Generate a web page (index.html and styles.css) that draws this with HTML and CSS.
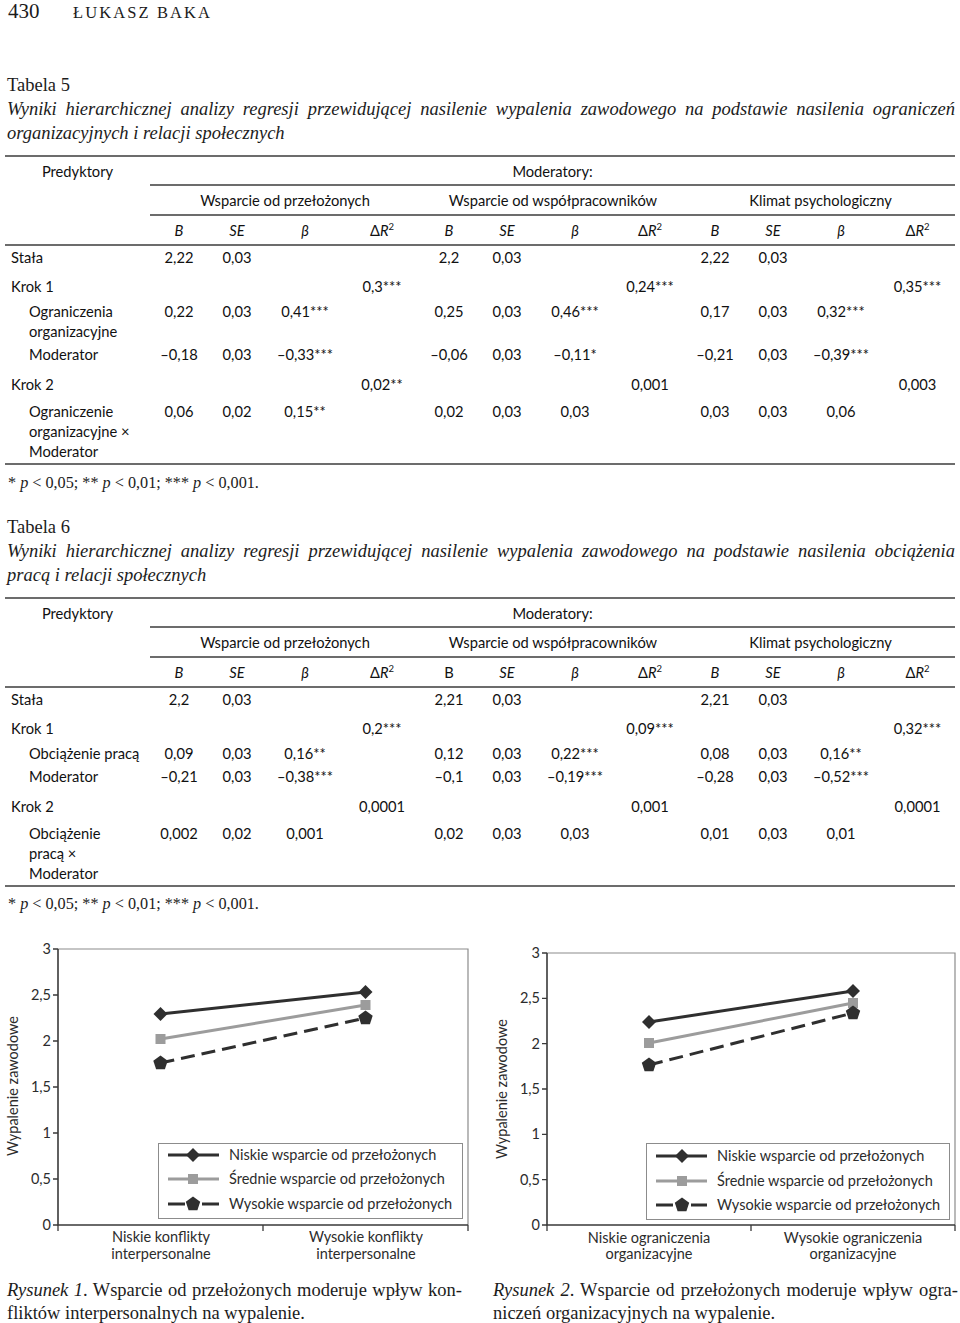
FILE: index.html
```html
<!DOCTYPE html>
<html lang="pl">
<head>
<meta charset="utf-8">
<title>Łukasz Baka – 430</title>
<link rel="stylesheet" href="styles.css">
</head>
<body>
<div class="page">
  <header class="running-head"><span class="folio">430</span><span class="author">ŁUKASZ BAKA</span></header>

  <section class="tab-block">
    <div class="tab-no">Tabela 5</div>
    <div class="tab-title"><span class="jline">Wyniki hierarchicznej analizy regresji przewidującej nasilenie wypalenia zawodowego na podstawie nasilenia ograniczeń</span><span class="line">organizacyjnych i relacji społecznych</span></div>
    <table class="reg">
      <colgroup>
        <col class="w145"><col class="w58"><col class="w58"><col class="w78"><col class="w76"><col class="w58"><col class="w58"><col class="w78"><col class="w72"><col class="w58"><col class="w58"><col class="w78"><col class="w75">
      </colgroup>
      <thead>
        <tr class="h1"><th rowspan="3" class="pred">Predyktory</th><th colspan="12" class="mods">Moderatory:</th></tr>
        <tr class="h2"><th colspan="4">Wsparcie od przełożonych</th><th colspan="4">Wsparcie od współpracowników</th><th colspan="4">Klimat psychologiczny</th></tr>
        <tr class="h3"><th><i>B</i></th><th><i>SE</i></th><th><i class="gr">β</i></th><th><span class="gr">Δ</span><i>R</i><sup>2</sup></th><th><i>B</i></th><th><i>SE</i></th><th><i class="gr">β</i></th><th><span class="gr">Δ</span><i>R</i><sup>2</sup></th><th><i>B</i></th><th><i>SE</i></th><th><i class="gr">β</i></th><th><span class="gr">Δ</span><i>R</i><sup>2</sup></th></tr>
      </thead>
      <tbody>
        <tr class="r-const"><td class="lab">Stała</td><td>2,22</td><td>0,03</td><td></td><td></td><td>2,2</td><td>0,03</td><td></td><td></td><td>2,22</td><td>0,03</td><td></td><td></td></tr>
        <tr class="r-step"><td class="lab">Krok 1</td><td></td><td></td><td></td><td>0,3***</td><td></td><td></td><td></td><td>0,24***</td><td></td><td></td><td></td><td>0,35***</td></tr>
        <tr class="r-sub1"><td class="lab sub">Ograniczenia<br>organizacyjne</td><td>0,22</td><td>0,03</td><td>0,41***</td><td></td><td>0,25</td><td>0,03</td><td>0,46***</td><td></td><td>0,17</td><td>0,03</td><td>0,32***</td><td></td></tr>
        <tr class="r-sub2"><td class="lab sub">Moderator</td><td>–0,18</td><td>0,03</td><td>–0,33***</td><td></td><td>–0,06</td><td>0,03</td><td>–0,11*</td><td></td><td>–0,21</td><td>0,03</td><td>–0,39***</td><td></td></tr>
        <tr class="r-step2"><td class="lab">Krok 2</td><td></td><td></td><td></td><td>0,02**</td><td></td><td></td><td></td><td>0,001</td><td></td><td></td><td></td><td>0,003</td></tr>
        <tr class="r-int"><td class="lab sub">Ograniczenie<br>organizacyjne ×<br>Moderator</td><td>0,06</td><td>0,02</td><td>0,15**</td><td></td><td>0,02</td><td>0,03</td><td>0,03</td><td></td><td>0,03</td><td>0,03</td><td>0,06</td><td></td></tr>
      </tbody>
    </table>
    <p class="note">* <i>p</i> &lt; 0,05; ** <i>p</i> &lt; 0,01; *** <i>p</i> &lt; 0,001.</p>
  </section>

  <section class="tab-block">
    <div class="tab-no tab-no-2">Tabela 6</div>
    <div class="tab-title"><span class="jline">Wyniki hierarchicznej analizy regresji przewidującej nasilenie wypalenia zawodowego na podstawie nasilenia obciążenia</span><span class="line">pracą i relacji społecznych</span></div>
    <table class="reg reg-2">
      <colgroup>
        <col class="w145"><col class="w58"><col class="w58"><col class="w78"><col class="w76"><col class="w58"><col class="w58"><col class="w78"><col class="w72"><col class="w58"><col class="w58"><col class="w78"><col class="w75">
      </colgroup>
      <thead>
        <tr class="h1"><th rowspan="3" class="pred">Predyktory</th><th colspan="12" class="mods">Moderatory:</th></tr>
        <tr class="h2"><th colspan="4">Wsparcie od przełożonych</th><th colspan="4">Wsparcie od współpracowników</th><th colspan="4">Klimat psychologiczny</th></tr>
        <tr class="h3"><th><i>B</i></th><th><i>SE</i></th><th><i class="gr">β</i></th><th><span class="gr">Δ</span><i>R</i><sup>2</sup></th><th>B</th><th><i>SE</i></th><th><i class="gr">β</i></th><th><span class="gr">Δ</span><i>R</i><sup>2</sup></th><th><i>B</i></th><th><i>SE</i></th><th><i class="gr">β</i></th><th><span class="gr">Δ</span><i>R</i><sup>2</sup></th></tr>
      </thead>
      <tbody>
        <tr class="r-const"><td class="lab">Stała</td><td>2,2</td><td>0,03</td><td></td><td></td><td>2,21</td><td>0,03</td><td></td><td></td><td>2,21</td><td>0,03</td><td></td><td></td></tr>
        <tr class="r-step"><td class="lab">Krok 1</td><td></td><td></td><td></td><td>0,2***</td><td></td><td></td><td></td><td>0,09***</td><td></td><td></td><td></td><td>0,32***</td></tr>
        <tr class="r-sub1"><td class="lab sub">Obciążenie pracą</td><td>0,09</td><td>0,03</td><td>0,16**</td><td></td><td>0,12</td><td>0,03</td><td>0,22***</td><td></td><td>0,08</td><td>0,03</td><td>0,16**</td><td></td></tr>
        <tr class="r-sub2"><td class="lab sub">Moderator</td><td>–0,21</td><td>0,03</td><td>–0,38***</td><td></td><td>–0,1</td><td>0,03</td><td>–0,19***</td><td></td><td>–0,28</td><td>0,03</td><td>–0,52***</td><td></td></tr>
        <tr class="r-step2"><td class="lab">Krok 2</td><td></td><td></td><td></td><td>0,0001</td><td></td><td></td><td></td><td>0,001</td><td></td><td></td><td></td><td>0,0001</td></tr>
        <tr class="r-int"><td class="lab sub">Obciążenie<br>pracą ×<br>Moderator</td><td>0,002</td><td>0,02</td><td>0,001</td><td></td><td>0,02</td><td>0,03</td><td>0,03</td><td></td><td>0,01</td><td>0,03</td><td>0,01</td><td></td></tr>
      </tbody>
    </table>
    <p class="note note-2">* <i>p</i> &lt; 0,05; ** <i>p</i> &lt; 0,01; *** <i>p</i> &lt; 0,001.</p>
  </section>
</div>

<div class="figures">
  <figure class="fig fig-1">
    <svg class="chart" width="480" height="342" viewBox="0 0 480 342">
      <defs>
        <path id="dia-a" d="M0 -7L7 0L0 7L-7 0Z"/>
        <rect id="sq-a" x="-5" y="-5" width="10" height="10"/>
        <path id="pent-a" d="M0 -7.5L7.2 -2.3L4.4 6.2H-4.4L-7.2 -2.3Z"/>
      </defs>
      <text class="ax-title" transform="translate(18 149) rotate(-90)" text-anchor="middle">Wypalenie zawodowe</text>
      <path class="frame" d="M58 12H468V288"/>
      <path class="axis" d="M58 12V288H468"/>
      <path class="tick" d="M53 12H58M53 58H58M53 104H58M53 150H58M53 196H58M53 242H58M53 288H58M58 288V294M263 288V294M468 288V294"/>
      <g class="ylab" text-anchor="end">
        <text x="51" y="17">3</text>
        <text x="51" y="63">2,5</text>
        <text x="51" y="109">2</text>
        <text x="51" y="155">1,5</text>
        <text x="51" y="201">1</text>
        <text x="51" y="247">0,5</text>
        <text x="51" y="293">0</text>
      </g>
      <g class="xlab" text-anchor="middle">
        <text x="161" y="305">Niskie konflikty</text>
        <text x="161" y="322">interpersonalne</text>
        <text x="366" y="305">Wysokie konflikty</text>
        <text x="366" y="322">interpersonalne</text>
      </g>
      <line class="s-dark" x1="160.5" y1="77" x2="365.5" y2="55"/>
      <line class="s-gray" x1="160.5" y1="102" x2="365.5" y2="68"/>
      <line class="s-dark dashed" x1="160.5" y1="126" x2="365.5" y2="81"/>
      <use href="#dia-a" class="m-dark" x="160.5" y="77"/>
      <use href="#dia-a" class="m-dark" x="365.5" y="55"/>
      <use href="#sq-a" class="m-gray" x="160.5" y="102"/>
      <use href="#sq-a" class="m-gray" x="365.5" y="68"/>
      <use href="#pent-a" class="m-dark" x="160.5" y="126"/>
      <use href="#pent-a" class="m-dark" x="365.5" y="81"/>
      <rect class="legend" x="158.5" y="206.5" width="304" height="75"/>
      <line class="s-dark" x1="168" y1="218" x2="219" y2="218"/>
      <use href="#dia-a" class="m-dark" x="193" y="218"/>
      <line class="s-gray" x1="168" y1="242" x2="219" y2="242"/>
      <use href="#sq-a" class="m-gray" x="193" y="242"/>
      <line class="s-dark" x1="168" y1="267" x2="185" y2="267"/>
      <line class="s-dark" x1="202" y1="267" x2="219" y2="267"/>
      <use href="#pent-a" class="m-dark" x="193" y="267"/>
      <g class="legtext">
        <text x="229" y="223">Niskie wsparcie od przełożonych</text>
        <text x="229" y="247">Średnie wsparcie od przełożonych</text>
        <text x="229" y="272">Wysokie wsparcie od przełożonych</text>
      </g>
    </svg>
    <figcaption class="caption"><span class="jline"><i>Rysunek 1</i>. Wsparcie od przełożonych moderuje wpływ kon-</span><span class="line">fliktów interpersonalnych na wypalenie.</span></figcaption>
  </figure>

  <figure class="fig fig-2">
    <svg class="chart" width="480" height="342" viewBox="0 0 480 342">
      <defs>
        <path id="dia-b" d="M0 -7L7 0L0 7L-7 0Z"/>
        <rect id="sq-b" x="-5" y="-5" width="10" height="10"/>
        <path id="pent-b" d="M0 -7.5L7.2 -2.3L4.4 6.2H-4.4L-7.2 -2.3Z"/>
      </defs>
      <text class="ax-title" transform="translate(27 152) rotate(-90)" text-anchor="middle">Wypalenie zawodowe</text>
      <path class="frame" d="M67 16H475V288"/>
      <path class="axis" d="M67 16V288H475"/>
      <path class="tick" d="M62 16H67M62 61.3H67M62 106.7H67M62 152H67M62 197.3H67M62 242.7H67M62 288H67M67 288V294M271 288V294M475 288V294"/>
      <g class="ylab" text-anchor="end">
        <text x="60" y="21">3</text>
        <text x="60" y="66.3">2,5</text>
        <text x="60" y="111.7">2</text>
        <text x="60" y="157">1,5</text>
        <text x="60" y="202.3">1</text>
        <text x="60" y="247.7">0,5</text>
        <text x="60" y="293">0</text>
      </g>
      <g class="xlab" text-anchor="middle">
        <text x="169" y="306">Niskie ograniczenia</text>
        <text x="169" y="322">organizacyjne</text>
        <text x="373" y="306">Wysokie ograniczenia</text>
        <text x="373" y="322">organizacyjne</text>
      </g>
      <line class="s-dark" x1="169" y1="85" x2="373" y2="54"/>
      <line class="s-gray" x1="169" y1="106" x2="373" y2="66"/>
      <line class="s-dark dashed" x1="169" y1="128" x2="373" y2="76"/>
      <use href="#dia-b" class="m-dark" x="169" y="85"/>
      <use href="#dia-b" class="m-dark" x="373" y="54"/>
      <use href="#sq-b" class="m-gray" x="169" y="106"/>
      <use href="#sq-b" class="m-gray" x="373" y="66"/>
      <use href="#pent-b" class="m-dark" x="169" y="128"/>
      <use href="#pent-b" class="m-dark" x="373" y="76"/>
      <rect class="legend" x="166.5" y="206.5" width="303" height="76"/>
      <line class="s-dark" x1="176" y1="219" x2="227" y2="219"/>
      <use href="#dia-b" class="m-dark" x="202" y="219"/>
      <line class="s-gray" x1="176" y1="244" x2="227" y2="244"/>
      <use href="#sq-b" class="m-gray" x="202" y="244"/>
      <line class="s-dark" x1="176" y1="268" x2="193" y2="268"/>
      <line class="s-dark" x1="211" y1="268" x2="227" y2="268"/>
      <use href="#pent-b" class="m-dark" x="202" y="268"/>
      <g class="legtext">
        <text x="237" y="224">Niskie wsparcie od przełożonych</text>
        <text x="237" y="249">Średnie wsparcie od przełożonych</text>
        <text x="237" y="273">Wysokie wsparcie od przełożonych</text>
      </g>
    </svg>
    <figcaption class="caption"><span class="jline"><i>Rysunek 2</i>. Wsparcie od przełożonych moderuje wpływ ogra-</span><span class="line">niczeń organizacyjnych na wypalenie.</span></figcaption>
  </figure>
</div>
</body>
</html>
```

FILE: styles.css
```css
* { box-sizing: border-box; }

html, body {
  margin: 0;
  padding: 0;
  background: #fff;
}

body {
  width: 960px;
  color: #1c1c1c;
  font-family: "Liberation Serif", "Times New Roman", serif;
}

.page {
  padding: 0 5px 0 7px;
}

/* running head */
.running-head {
  display: flex;
  align-items: baseline;
  height: 22px;
  line-height: 22px;
  padding-left: 1px;
}
.folio {
  font-size: 21px;
  width: 65px;
}
.author {
  font-size: 16.5px;
  letter-spacing: 2.1px;
}

/* table captions */
.tab-no {
  margin-top: 51px;
  font-size: 18.5px;
  line-height: 24px;
}
.tab-no-2 {
  margin-top: 20px;
}
.tab-title {
  font-style: italic;
  font-size: 18.5px;
  line-height: 24px;
}
.jline {
  display: block;
  text-align: justify;
  text-align-last: justify;
}
.line {
  display: block;
}

/* regression tables */
table.reg {
  margin: 10px 0 0 -2px;
  width: 950px;
  table-layout: fixed;
  border-collapse: collapse;
  font-family: Lato, "Open Sans", sans-serif;
  font-size: 14.7px;
  line-height: 20px;
  color: #111;
}
.reg-2 { margin-top: 4px; }

.w145 { width: 145px; }
.w58 { width: 58px; }
.w72 { width: 72px; }
.w75 { width: 75px; }
.w76 { width: 76px; }
.w78 { width: 78px; }

.reg th, .reg td {
  padding: 0;
  font-weight: normal;
  text-align: center;
  vertical-align: top;
  white-space: nowrap;
}
.reg i { font-style: italic; }
.reg .gr {
  display: inline-block;
  height: 20px;
  line-height: 20px;
  overflow: visible;
}
.reg sup {
  font-size: 9.5px;
  line-height: 0;
  vertical-align: 6px;
}

.reg .h1 th {
  border-top: 2px solid #6c6c6c;
  padding: 4px 0 3px;
}
.reg .h1 .mods,
.reg .h2 th,
.reg .h3 th,
.reg .pred {
  border-bottom: 2px solid #6c6c6c;
}
.reg .h2 th { padding: 4px 0 4px; }
.reg .h3 th {
  padding: 4px 0 4px;
  height: 30px;
}
.reg .pred { padding-top: 4px; }

.reg td.lab {
  text-align: left;
  padding-left: 6px;
}
.reg td.lab.sub {
  padding-left: 24px;
}

.reg .r-const td { padding-top: 1px; }
.reg .r-step td { padding-top: 9px; }
.reg .r-sub1 td { padding-top: 5px; }
.reg .r-sub2 td { padding-top: 3px; }
.reg .r-step2 td { padding-top: 10px; }
.reg .r-int td {
  padding-top: 7px;
  padding-bottom: 2px;
  border-bottom: 2px solid #6c6c6c;
}

.note {
  margin: 6px 0 0;
  font-size: 16.2px;
  line-height: 24px;
  padding-left: 1px;
}
.note-2 { margin-top: 5px; }

/* figures */
.figures {
  display: flex;
  margin-top: 21px;
}
.fig {
  margin: 0;
  width: 480px;
  flex: none;
}
.chart {
  display: block;
}
.caption {
  font-size: 18.5px;
  line-height: 23px;
}
.fig-1 .caption { padding: 0 18px 0 7px; }
.fig-2 .caption { padding: 0 2px 0 13px; }

.chart text {
  font-family: Lato, "Open Sans", sans-serif;
  font-size: 14.5px;
  fill: #2c2c2c;
}
.frame {
  fill: none;
  stroke: #8c8c8c;
  stroke-width: 1.2;
}
.axis {
  fill: none;
  stroke: #3a3a3a;
  stroke-width: 1.6;
}
.tick {
  fill: none;
  stroke: #3a3a3a;
  stroke-width: 1.3;
}
.legend {
  fill: #fff;
  stroke: #8c8c8c;
  stroke-width: 1;
}
.s-dark {
  stroke: #2f2f2f;
  stroke-width: 3;
}
.s-gray {
  stroke: #9c9c9c;
  stroke-width: 3;
}
.dashed {
  stroke-dasharray: 14 7;
}
.m-dark { fill: #2f2f2f; }
.m-gray { fill: #9c9c9c; }
```
